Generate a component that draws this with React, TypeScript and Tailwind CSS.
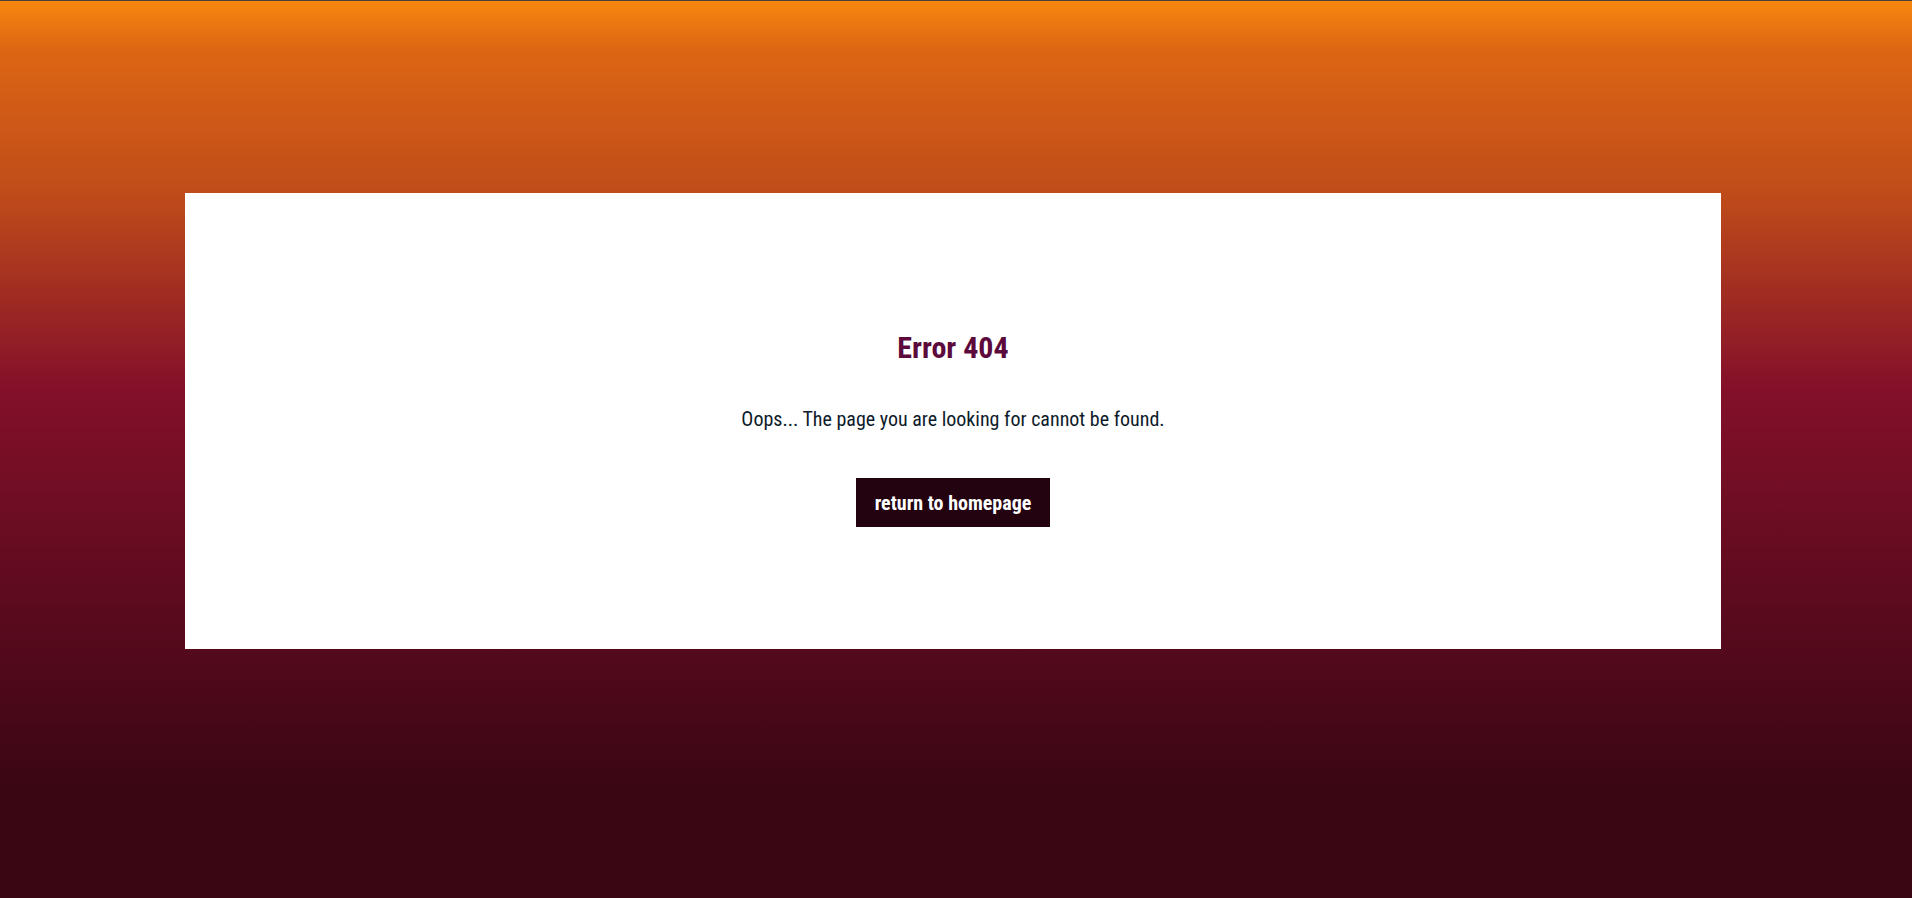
import React from 'react';

export default function App() {
  return (
    <div
      className="min-h-[898px] w-full border-t border-[#4a4038] bg-[linear-gradient(to_bottom,#f7870f_0px,#dc6513_50px,#c04c1a_190px,#84102a_385px,#3a0614_790px,#3b0614_898px)] pt-[192px] font-['Roboto',sans-serif] [font-stretch:condensed]"
    >
      <div className="ml-[185px] flex h-[456px] w-[1536px] flex-col items-center bg-white pt-[137px]">
        <h1 className="text-[30px] font-bold leading-[36px] text-[#5c0a3c]">Error 404</h1>
        <p className="mt-[41px] text-[20px] leading-[24px] text-[#0d1b2a]">
          Oops... The page you are looking for cannot be found.
        </p>
        <a
          href="#"
          className="mt-[47px] flex h-[49px] items-center bg-[#22030f] px-[19px] text-[20px] font-bold text-white"
        >
          return to homepage
        </a>
      </div>
    </div>
  );
}
